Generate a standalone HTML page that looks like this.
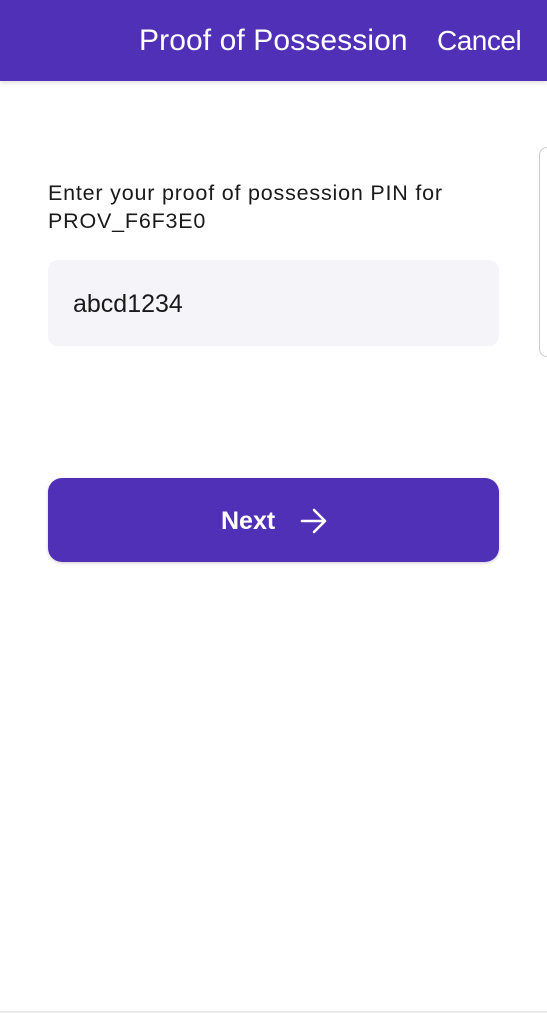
<!DOCTYPE html>
<html><head><meta charset="utf-8"><style>
body{margin:0;width:547px;height:1013px;background:#fff;font-family:"Liberation Sans",sans-serif;position:relative;overflow:hidden}
.hdr{position:absolute;left:0;top:0;width:547px;height:81px;background:#5130b8;box-shadow:0 2px 4px rgba(0,0,0,.12)}
.t{position:absolute;top:24px;color:#fff;font-size:28px;white-space:nowrap}
.lbl{position:absolute;left:48px;top:179px;font-size:21.5px;letter-spacing:0.8px;line-height:28px;color:#1a1a1a}
.inp{position:absolute;left:48px;top:260px;width:451px;height:86px;background:#f5f5f9;border-radius:10px}
.inp span{position:absolute;left:25px;top:30px;font-size:25px;color:#1a1a1a}
.btn{position:absolute;left:48px;top:478px;width:451px;height:84px;background:#5130b8;border-radius:14px;box-shadow:0 1px 3px rgba(0,0,0,.2)}
.btn span{position:absolute;left:173px;top:29px;font-size:25px;font-weight:bold;color:#fff}
.card{position:absolute;left:539px;top:147px;width:30px;height:208px;border:1px solid #ccc;border-radius:8px}
.bot{position:absolute;left:0;top:1011px;width:547px;height:2px;background:#ececec}
</style></head><body>
<div class="hdr">
<div class="t" style="left:139px;font-size:30px;top:24px;letter-spacing:0.1px">Proof of Possession</div>
<div class="t" style="left:437px;letter-spacing:-0.5px;top:25px">Cancel</div>
</div>
<div class="card"></div>
<div class="lbl">Enter your proof of possession PIN for<br>PROV_F6F3E0</div>
<div class="inp"><span>abcd1234</span></div>
<div class="btn"><span>Next</span>
<svg style="position:absolute;left:252px;top:30px" width="28" height="26" viewBox="0 0 28 26"><path d="M2 13H25M14 2L25 13L14 24" fill="none" stroke="#fff" stroke-width="2.6" stroke-linecap="round" stroke-linejoin="round"/></svg>
</div>
<div class="bot"></div>
</body></html>
